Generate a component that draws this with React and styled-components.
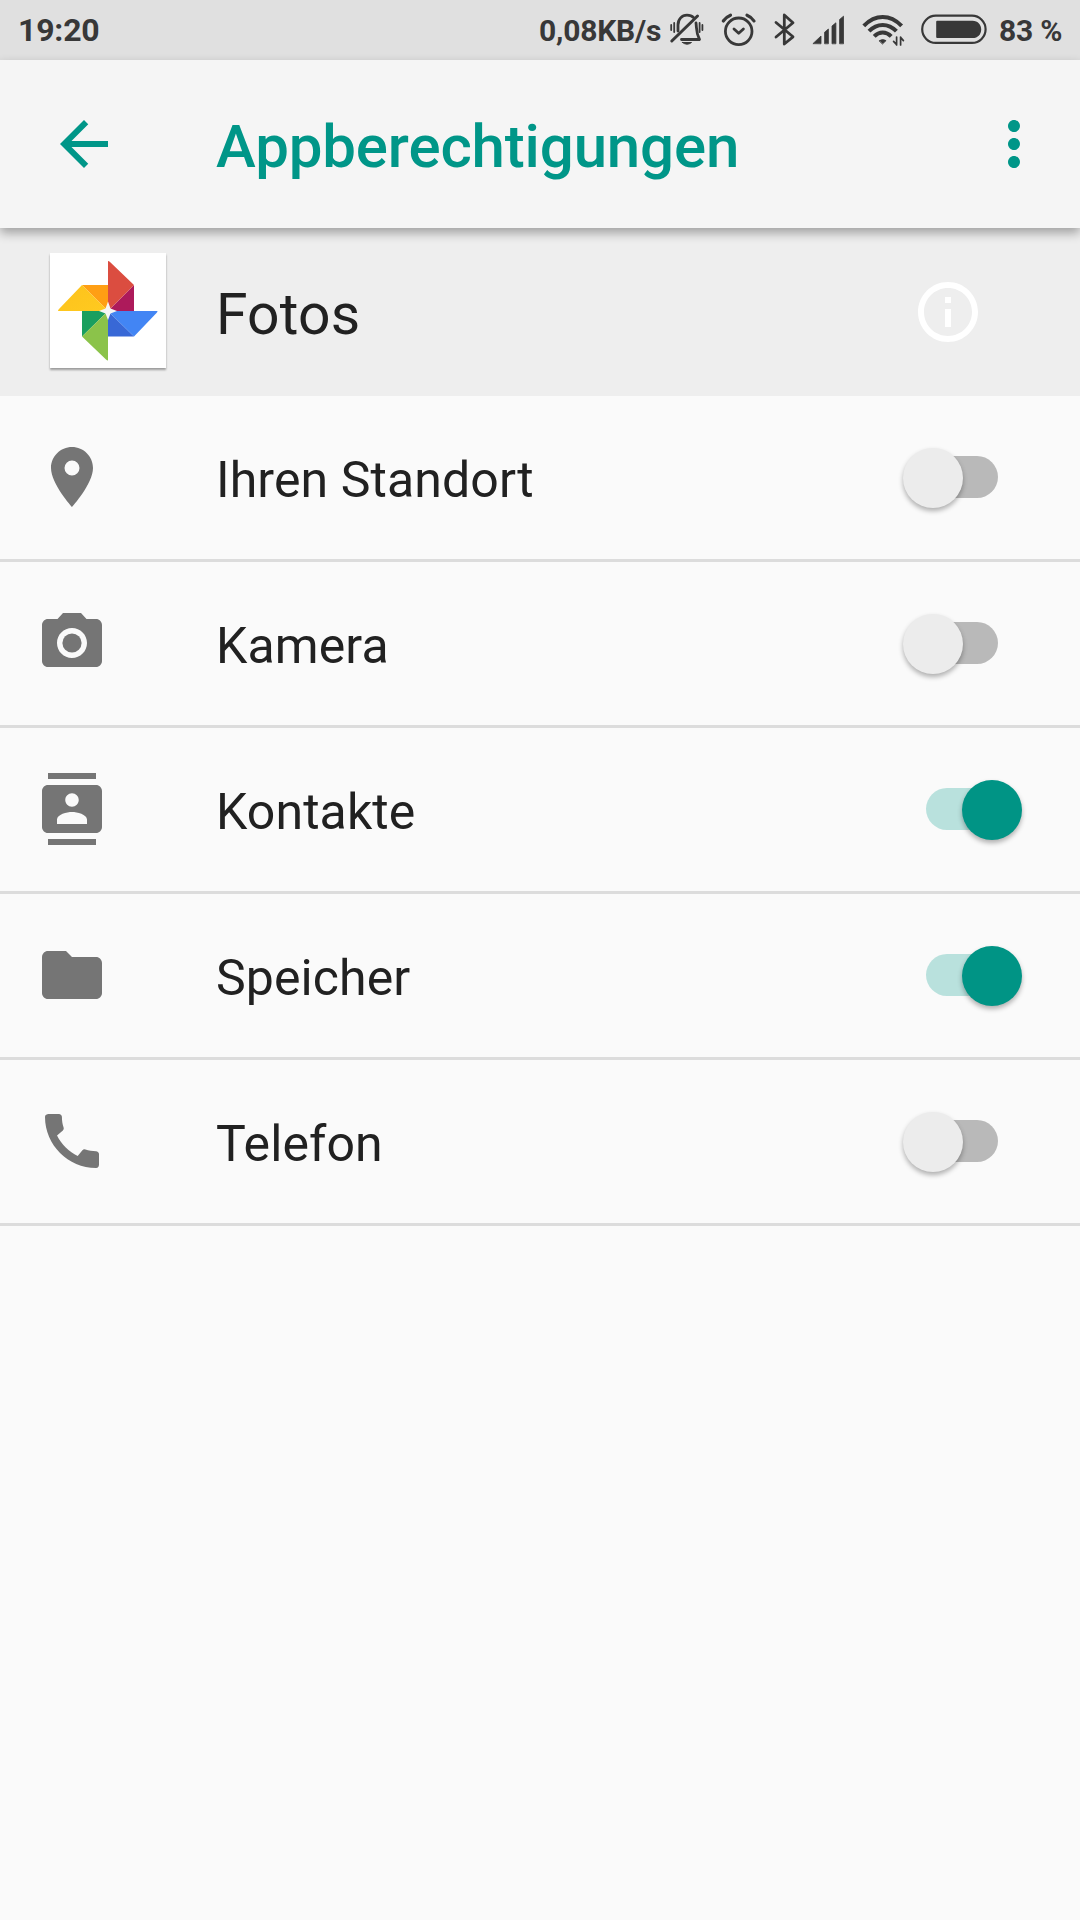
import React, { useState } from 'react'
import styled, { createGlobalStyle } from 'styled-components'
import {
    MdArrowBack,
    MdMoreVert,
    MdPlace,
    MdContacts,
    MdFolder,
    MdCall
} from 'react-icons/md'

const GlobalStyle = createGlobalStyle`
    * {
        box-sizing: border-box;
    }

    body {
        margin: 0;
        background-color: #fafafa;
        font-family: Roboto, "Noto Sans", sans-serif;
        color: #212121;
    }
`

const Screen = styled.div`
    width: 1080px;
    height: 1920px;
    display: flex;
    flex-direction: column;
    background-color: #fafafa;
    overflow: hidden;
`

const StatusBar = styled.div`
    height: 60px;
    display: flex;
    align-items: center;
    padding-left: 18px;
    background-color: #e0e0e0;
    color: #383838;
    flex-shrink: 0;
`

const Clock = styled.span`
    font-size: 32px;
    font-weight: 700;
    line-height: 60px;
    letter-spacing: -0.2px;
`

const Speed = styled.span`
    width: 130px;
    margin-left: auto;
    padding-top: 2px;
    font-size: 30px;
    font-weight: 700;
    line-height: 60px;
    letter-spacing: -0.2px;
    white-space: nowrap;
`

const Battery = styled.span`
    width: 81px;
    padding-top: 2px;
    font-size: 30px;
    font-weight: 700;
    line-height: 60px;
    letter-spacing: -0.2px;
    white-space: nowrap;
`

const StatusIcon = styled.svg`
    display: block;
    flex-shrink: 0;
    fill: none;
    stroke: #383838;
    stroke-width: 2.8;
    stroke-linecap: round;
    stroke-linejoin: round;
`

const Toolbar = styled.header`
    height: 168px;
    display: flex;
    align-items: center;
    padding: 0 30px 0 48px;
    background-color: #f5f5f5;
    color: #009688;
    box-shadow: 0 5px 10px rgba(0, 0, 0, 0.33);
    position: relative;
    z-index: 1;
    flex-shrink: 0;
`

const Title = styled.h1`
    flex: 1;
    margin: 0 0 0 96px;
    padding-top: 6px;
    font-size: 60px;
    font-weight: 500;
    line-height: 72px;
    letter-spacing: -0.14px;
`

const IconButton = styled.button`
    width: 72px;
    height: 72px;
    padding: 0;
    border: none;
    background: none;
    color: inherit;
    cursor: pointer;

    svg {
        display: block;
    }
`

const AppHeader = styled.section`
    height: 168px;
    display: flex;
    align-items: center;
    padding: 0 96px 0 50px;
    background-color: #eeeeee;
    flex-shrink: 0;
`

const AppIcon = styled.div`
    width: 116px;
    height: 115px;
    margin-bottom: 3px;
    background-color: #ffffff;
    box-shadow: 0 2px 2px rgba(0, 0, 0, 0.35);

    svg {
        display: block;
    }
`

const AppName = styled.h2`
    flex: 1;
    margin: 0 0 0 50px;
    padding-top: 5px;
    font-size: 57px;
    font-weight: 400;
    line-height: 68px;
    letter-spacing: 0.2px;
`

const List = styled.ul`
    margin: 0;
    padding: 0;
    list-style: none;
`

const Row = styled.li`
    height: 166px;
    display: flex;
    align-items: center;
    padding: 0 58px 1px 36px;
    border-bottom: 3px solid #dcdcdc;
`

const RowIcon = styled.div`
    width: 72px;
    height: 72px;
    color: #757575;

    svg {
        display: block;
    }
`

const Label = styled.span`
    flex: 1;
    margin-left: 108px;
    padding-top: 5px;
    font-size: 50px;
    line-height: 60px;
    letter-spacing: 0.1px;
`

const Switch = styled.button`
    width: 120px;
    height: 60px;
    display: flex;
    align-items: center;
    justify-content: ${props => props.$on ? 'flex-end' : 'flex-start'};
    padding: ${props => props.$on ? '0 12px 0 0' : '0 0 0 12px'};
    border: none;
    background: none;
    cursor: pointer;
`

const Track = styled.span`
    width: 84px;
    height: 42px;
    display: flex;
    align-items: center;
    justify-content: ${props => props.$on ? 'flex-end' : 'flex-start'};
    border-radius: 21px;
    background-color: ${props => props.$on ? '#b9e1dd' : '#b9b9b9'};
`

const Thumb = styled.span`
    width: 60px;
    height: 60px;
    margin: ${props => props.$on ? '1px -11.5px 0 0' : '1px 0 0 -11.5px'};
    flex-shrink: 0;
    border-radius: 50%;
    background-color: ${props => props.$on ? '#009485' : '#ececec'};
    box-shadow: 0 3px 5px rgba(0, 0, 0, 0.3);
`

const MuteIcon = () => (
    <StatusIcon width="43" height="60" viewBox="669 0 43 60">
        <path d="M678 31V25C678 19 682 15.2 687 15.2C690 15.2 692 16 693.5 17.5" />
        <path d="M696 23C696.8 29 696 33 699.5 39.5H681.5" />
        <path d="M671.8 41L697.5 16" strokeWidth="3" />
        <path d="M682.5 42.5H691.5Q687 46 682.5 42.5Z" fill="#383838" strokeWidth="1" />
        <path d="M671.2 25V30M674.2 23V32M699.6 23V32M702.4 25V30" strokeWidth="1.8" />
    </StatusIcon>
)

const AlarmIcon = () => (
    <StatusIcon width="56" height="60" viewBox="712 0 56 60">
        <circle cx="738.7" cy="31.3" r="13.3" />
        <path d="M734 29L738.7 33.3L743.4 29" />
        <path d="M723.3 21Q726 17 730.5 15.2M747 15.2Q751.5 17 754 21" strokeWidth="3.2" />
    </StatusIcon>
)

const BluetoothIcon = () => (
    <StatusIcon width="40" height="60" viewBox="768 0 40 60">
        <path d="M776 22.5L793 36.8L784.3 44V15L793 22.7L776 37" />
    </StatusIcon>
)

const SignalIcon = () => (
    <StatusIcon width="48" height="60" viewBox="808 0 48 60">
        <g fill="#383838" strokeWidth="0.8">
            <path d="M813.2 43.4L821 36V43.4Z" />
            <path d="M824.6 43.4V32.2L828.4 29V43.4Z" />
            <path d="M832 43.4V26L835.9 22.8V43.4Z" />
            <path d="M839.6 43.4V19.5L843.5 16.2V43.4Z" />
        </g>
    </StatusIcon>
)

const WifiIcon = () => (
    <StatusIcon width="58" height="60" viewBox="856 0 58 60">
        <g strokeWidth="4" strokeLinecap="butt">
            <path d="M863.8 25.8Q872.5 17 882.7 17T901.6 25.8" />
            <path d="M869 31.2Q875 24.9 882.7 24.9T896.4 31.2" />
            <path d="M874.2 36.4Q878 32.5 882.7 32.5T891.2 36.4" />
        </g>
        <path d="M879.3 40.6Q882.7 38.4 886.1 40.6L882.7 43.8Z" fill="#383838" strokeWidth="0.8" />
        <path d="M896.6 37V45M893.6 41.4L896.6 44.6M900.6 45V37M903.4 40.6L900.6 37.4" strokeWidth="1.7" />
    </StatusIcon>
)

const BatteryIcon = () => (
    <StatusIcon width="85" height="60" viewBox="914 0 85 60">
        <rect x="922.2" y="15.7" width="63.4" height="27.2" rx="13.6" strokeWidth="2.2" />
        <path
            d="M937.2 20.8H972.5C978 20.8 981.2 25 981.2 29.4S978 38 972.5 38H937.2Q936.2 38 936.2 37V21.8Q936.2 20.8 937.2 20.8Z"
            fill="#383838"
            stroke="none"
        />
    </StatusIcon>
)

const PinwheelLogo = () => (
    <svg width="116" height="115" viewBox="-58 -58 116 115">
        <defs>
            <linearGradient id="yellow" x1="0" y1="0" x2="1" y2="1">
                <stop offset="0" stopColor="#fdc21c" />
                <stop offset="1" stopColor="#ffca20" />
            </linearGradient>
        </defs>
        <path d="M-26 -26H0V0Z" fill="#ff9f14" />
        <path d="M-50 0Q-50 -1 -49 -2L-26 -26L0 0Z" fill="url(#yellow)" />
        <path d="M26 -26V0H0Z" fill="#ad1a5b" />
        <path d="M0 -50Q1 -50 2 -49L26 -26L0 0Z" fill="#db4d40" />
        <path d="M26 25.5H0V0Z" fill="#3868d6" />
        <path d="M49.5 0Q49.5 1 48.5 2L26 25.5L0 0Z" fill="#4285f4" />
        <path d="M-26 0V25.5L0 0Z" fill="#1a9f5f" />
        <path d="M0 49.5Q-1 49.5 -2 48.5L-26 25.5L0 0Z" fill="#8bc34a" />
        <path d="M0 -9.5L2.5 -2.5L9 0L2.5 2.5L0 9L-2.5 2.5L-9 0L-2.5 -2.5Z" fill="#f5f5f5" />
    </svg>
)

const InfoIcon = () => (
    <svg width="72" height="72" viewBox="0 0 24 24" fill="#ffffff">
        <path d="M11 17h2v-6h-2v6zm1-15C6.48 2 2 6.48 2 12s4.48 10 10 10 10-4.48 10-10S17.52 2 12 2zm0 18c-4.41 0-8-3.59-8-8s3.59-8 8-8 8 3.59 8 8-3.59 8-8 8zM11 9h2V7h-2v2z" />
    </svg>
)

const CameraIcon = () => (
    <svg width="72" height="72" viewBox="0 0 24 24" fill="currentColor">
        <circle cx="12" cy="12" r="3.2" />
        <path d="M9 2L7.17 4H4c-1.1 0-2 .9-2 2v12c0 1.1.9 2 2 2h16c1.1 0 2-.9 2-2V6c0-1.1-.9-2-2-2h-3.17L15 2H9zm3 15c-2.76 0-5-2.24-5-5s2.24-5 5-5 5 2.24 5 5-2.24 5-5 5z" />
    </svg>
)

const permissions = [
    { id: 'location', label: 'Ihren Standort', icon: <MdPlace size={72} />, on: false },
    { id: 'camera', label: 'Kamera', icon: <CameraIcon />, on: false },
    { id: 'contacts', label: 'Kontakte', icon: <MdContacts size={72} />, on: true },
    { id: 'storage', label: 'Speicher', icon: <MdFolder size={72} />, on: true },
    { id: 'phone', label: 'Telefon', icon: <MdCall size={72} />, on: false }
]

const App = () => {

    const [items, setItems] = useState(permissions)

    function toggle(id) {
        setItems(items.map(item => item.id === id ? { ...item, on: !item.on } : item))
    }

    return (
        <Screen>
            <GlobalStyle />
            <StatusBar>
                <Clock>19:20</Clock>
                <Speed>0,08KB/s</Speed>
                <MuteIcon />
                <AlarmIcon />
                <BluetoothIcon />
                <SignalIcon />
                <WifiIcon />
                <BatteryIcon />
                <Battery>83 %</Battery>
            </StatusBar>
            <Toolbar>
                <IconButton aria-label="Zurück"><MdArrowBack size={72} /></IconButton>
                <Title>Appberechtigungen</Title>
                <IconButton aria-label="Mehr"><MdMoreVert size={72} /></IconButton>
            </Toolbar>
            <AppHeader>
                <AppIcon><PinwheelLogo /></AppIcon>
                <AppName>Fotos</AppName>
                <IconButton aria-label="Info"><InfoIcon /></IconButton>
            </AppHeader>
            <List>
                {items.map(item => (
                    <Row key={item.id}>
                        <RowIcon>{item.icon}</RowIcon>
                        <Label>{item.label}</Label>
                        <Switch $on={item.on} role="switch" aria-checked={item.on} aria-label={item.label} onClick={() => toggle(item.id)}>
                            <Track $on={item.on}>
                                <Thumb $on={item.on} />
                            </Track>
                        </Switch>
                    </Row>
                ))}
            </List>
        </Screen>
    )
}

export default App
